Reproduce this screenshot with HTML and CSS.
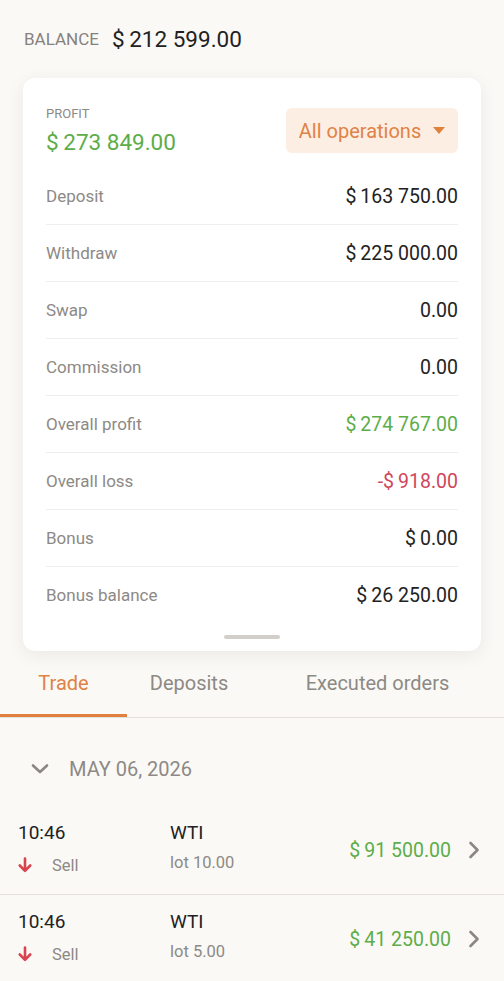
FILE: index.html
```html
<!DOCTYPE html>
<html lang="en">
<head>
    <meta charset="UTF-8">
    <meta name="viewport" content="width=device-width, initial-scale=1.0">
    <title>Balance</title>
    <link rel="stylesheet" href="styles.css">
</head>
<body>
    <header class="balance">
        <span class="balance-label">BALANCE</span>
        <span class="balance-value">$&#8201;212 599.00</span>
    </header>

    <div class="card">
        <div class="card-top">
            <div class="profit">
                <div class="profit-label">PROFIT</div>
                <div class="profit-value">$&#8201;273 849.00</div>
            </div>
            <button class="filter">All operations <span class="caret"></span></button>
        </div>
        <div class="stats">
            <div class="stat"><span class="stat-name">Deposit</span><span class="stat-value">$&#8201;163 750.00</span></div>
            <div class="stat"><span class="stat-name">Withdraw</span><span class="stat-value">$&#8201;225 000.00</span></div>
            <div class="stat"><span class="stat-name">Swap</span><span class="stat-value">0.00</span></div>
            <div class="stat"><span class="stat-name">Commission</span><span class="stat-value">0.00</span></div>
            <div class="stat"><span class="stat-name">Overall profit</span><span class="stat-value green">$&#8201;274 767.00</span></div>
            <div class="stat"><span class="stat-name">Overall loss</span><span class="stat-value red">-$&#8201;918.00</span></div>
            <div class="stat"><span class="stat-name">Bonus</span><span class="stat-value">$&#8201;0.00</span></div>
            <div class="stat"><span class="stat-name">Bonus balance</span><span class="stat-value">$&#8201;26 250.00</span></div>
        </div>
        <div class="handle"></div>
    </div>

    <nav class="tabs">
        <a href="#" class="tab tab-trade active">Trade</a>
        <a href="#" class="tab tab-deposits">Deposits</a>
        <a href="#" class="tab tab-orders">Executed orders</a>
    </nav>

    <div class="date-row">
        <svg class="date-chevron" width="18" height="12" viewBox="0 0 18 12">
            <path d="M2 2.5 L9 9 L16 2.5" fill="none" stroke="#8a8784" stroke-width="2.6" stroke-linecap="round" stroke-linejoin="round"/>
        </svg>
        <span>MAY 06, 2026</span>
    </div>

    <div class="trades">
        <div class="trade">
            <div class="trade-time">
                <div class="time">10:46</div>
                <div class="side">
                    <svg width="14" height="16" viewBox="0 0 14 16"><path d="M7 1.5 V13.5 M1.8 8.5 L7 13.8 L12.2 8.5" fill="none" stroke="#d9434f" stroke-width="2.6" stroke-linecap="round" stroke-linejoin="round"/></svg>
                    <span>Sell</span>
                </div>
            </div>
            <div class="trade-symbol">
                <div class="symbol">WTI</div>
                <div class="lot">lot 10.00</div>
            </div>
            <div class="trade-amount">$&#8201;91 500.00</div>
            <svg class="trade-chevron" width="12" height="18" viewBox="0 0 12 18"><path d="M2.5 2 L9.5 9 L2.5 16" fill="none" stroke="#8a8784" stroke-width="2.6" stroke-linecap="round" stroke-linejoin="round"/></svg>
        </div>
        <div class="trade">
            <div class="trade-time">
                <div class="time">10:46</div>
                <div class="side">
                    <svg width="14" height="16" viewBox="0 0 14 16"><path d="M7 1.5 V13.5 M1.8 8.5 L7 13.8 L12.2 8.5" fill="none" stroke="#d9434f" stroke-width="2.6" stroke-linecap="round" stroke-linejoin="round"/></svg>
                    <span>Sell</span>
                </div>
            </div>
            <div class="trade-symbol">
                <div class="symbol">WTI</div>
                <div class="lot">lot 5.00</div>
            </div>
            <div class="trade-amount">$&#8201;41 250.00</div>
            <svg class="trade-chevron" width="12" height="18" viewBox="0 0 12 18"><path d="M2.5 2 L9.5 9 L2.5 16" fill="none" stroke="#8a8784" stroke-width="2.6" stroke-linecap="round" stroke-linejoin="round"/></svg>
        </div>
    </div>
</body>
</html>
```

FILE: styles.css
```css
body {
    font-family: Roboto, "Noto Sans", Arial, sans-serif;
    background-color: #faf9f6;
    color: #222;
    margin: 0;
    padding: 0;
}
.balance {
    height: 78px;
    display: flex;
    align-items: center;
    padding-left: 24px;
}
.balance-label {
    font-size: 17px;
    color: #85817d;
    margin-right: 13px;
}
.balance-value {
    font-size: 22.5px;
    color: #222;
}
.card {
    margin: 0 23px;
    background-color: #fff;
    border-radius: 12px;
    box-shadow: 0 4px 18px rgba(0, 0, 0, 0.07);
    padding: 0 23px 12px;
}
.card-top {
    display: flex;
    justify-content: space-between;
    padding-top: 28px;
    margin-bottom: 12px;
}
.profit-label {
    font-size: 13px;
    line-height: 16px;
    color: #8d8985;
}
.profit-value {
    font-size: 22.5px;
    line-height: 28px;
    margin-top: 6px;
    color: #5dad49;
}
.filter {
    margin-top: 2px;
    height: 45px;
    width: 172px;
    border: none;
    border-radius: 6px;
    background-color: #fdeee4;
    color: #e08245;
    font-family: inherit;
    font-size: 20px;
    display: flex;
    align-items: center;
    justify-content: center;
    gap: 12px;
    padding: 0;
}
.caret {
    width: 0;
    height: 0;
    border-left: 6px solid transparent;
    border-right: 6px solid transparent;
    border-top: 7px solid #e0823c;
}
.stat {
    height: 56px;
    display: flex;
    justify-content: space-between;
    align-items: center;
    border-bottom: 1px solid #f0eeeb;
}
.stat:last-child {
    border-bottom: none;
}
.stat-name {
    font-size: 17px;
    color: #8d8985;
}
.stat-value {
    font-size: 19.5px;
    color: #222;
}
.green {
    color: #5dad49;
}
.red {
    color: #d0475b;
}
.handle {
    width: 56px;
    height: 4px;
    border-radius: 2px;
    background-color: #d2cfca;
    margin: 12px auto 0;
}
.tabs {
    display: flex;
    border-bottom: 1px solid #e3e0dc;
}
.tab {
    display: block;
    text-align: center;
    font-size: 20px;
    line-height: 26px;
    padding: 19px 0 21px;
    color: #8d8985;
    text-decoration: none;
}
.tab-trade {
    width: 127px;
}
.tab-deposits {
    width: 124px;
}
.tab-orders {
    width: 253px;
}
.tab.active {
    color: #e08245;
    box-shadow: inset 0 -3px 0 #e07f3e;
}
.date-row {
    display: flex;
    align-items: center;
    padding: 38px 0 19px 31px;
    font-size: 20px;
    line-height: 26px;
    color: #8d8985;
}
.date-chevron {
    margin-right: 20px;
}
.trade {
    display: flex;
    align-items: center;
    height: 88px;
    padding: 0 24px 0 18px;
    border-bottom: 1px solid #e3e0dc;
    margin-top: 5px;
}
.trade + .trade {
    margin-top: 0;
}
.trade:last-child {
    border-bottom: none;
}
.trade-time {
    width: 152px;
    align-self: flex-start;
    padding-top: 15px;
}
.time {
    font-size: 19px;
    line-height: 24px;
    color: #222;
}
.side {
    display: flex;
    align-items: center;
    margin-top: 9px;
    height: 22px;
    font-size: 16.5px;
    color: #8d8985;
}
.side svg {
    margin-right: 20px;
}
.trade-symbol {
    flex: 1;
    align-self: flex-start;
    padding-top: 15px;
}
.symbol {
    font-size: 19px;
    line-height: 24px;
    color: #222;
}
.lot {
    font-size: 16.5px;
    line-height: 22px;
    margin-top: 7px;
    color: #8d8985;
}
.trade-amount {
    font-size: 19.5px;
    color: #5dad49;
    margin-right: 17px;
}
```
